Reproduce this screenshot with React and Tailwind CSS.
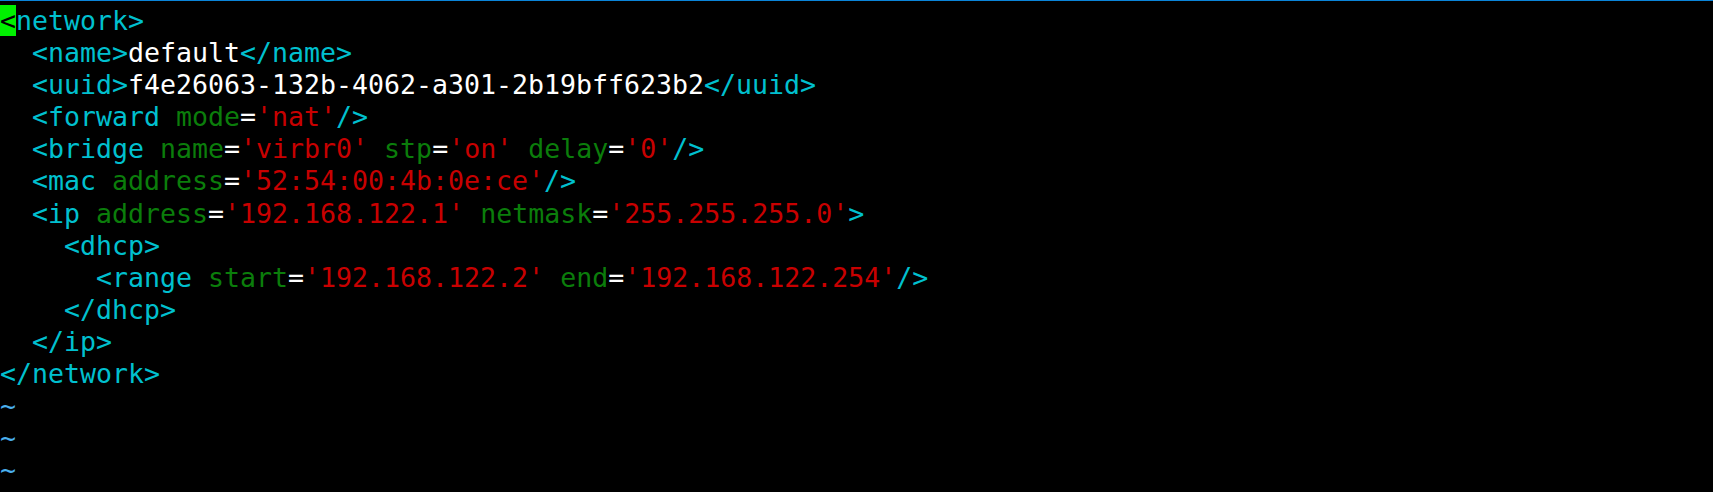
const Tag = ({ children }) => <span className="text-[#00c0cf]">{children}</span>;
const Attr = ({ children }) => <span className="text-[#0b7d0b]">{children}</span>;
const Val = ({ children }) => <span className="text-[#c80000]">{children}</span>;
const Eq = () => <span className="text-white">=</span>;

const lines = [
  <>
    <span className="bg-[#00f000] text-black">&lt;</span>
    <Tag>network&gt;</Tag>
  </>,
  <>
    {"  "}
    <Tag>&lt;name&gt;</Tag>
    <span className="text-white">default</span>
    <Tag>&lt;/name&gt;</Tag>
  </>,
  <>
    {"  "}
    <Tag>&lt;uuid&gt;</Tag>
    <span className="text-white">f4e26063-132b-4062-a301-2b19bff623b2</span>
    <Tag>&lt;/uuid&gt;</Tag>
  </>,
  <>
    {"  "}
    <Tag>&lt;forward</Tag> <Attr>mode</Attr>
    <Eq />
    <Val>'nat'</Val>
    <Tag>/&gt;</Tag>
  </>,
  <>
    {"  "}
    <Tag>&lt;bridge</Tag> <Attr>name</Attr>
    <Eq />
    <Val>'virbr0'</Val> <Attr>stp</Attr>
    <Eq />
    <Val>'on'</Val> <Attr>delay</Attr>
    <Eq />
    <Val>'0'</Val>
    <Tag>/&gt;</Tag>
  </>,
  <>
    {"  "}
    <Tag>&lt;mac</Tag> <Attr>address</Attr>
    <Eq />
    <Val>'52:54:00:4b:0e:ce'</Val>
    <Tag>/&gt;</Tag>
  </>,
  <>
    {"  "}
    <Tag>&lt;ip</Tag> <Attr>address</Attr>
    <Eq />
    <Val>'192.168.122.1'</Val> <Attr>netmask</Attr>
    <Eq />
    <Val>'255.255.255.0'</Val>
    <Tag>&gt;</Tag>
  </>,
  <>
    {"    "}
    <Tag>&lt;dhcp&gt;</Tag>
  </>,
  <>
    {"      "}
    <Tag>&lt;range</Tag> <Attr>start</Attr>
    <Eq />
    <Val>'192.168.122.2'</Val> <Attr>end</Attr>
    <Eq />
    <Val>'192.168.122.254'</Val>
    <Tag>/&gt;</Tag>
  </>,
  <>
    {"    "}
    <Tag>&lt;/dhcp&gt;</Tag>
  </>,
  <>
    {"  "}
    <Tag>&lt;/ip&gt;</Tag>
  </>,
  <Tag>&lt;/network&gt;</Tag>,
];

export default function App() {
  return (
    <div className="w-[1713px] h-[492px] overflow-hidden bg-black border-t border-[#0a84d8] pt-[4px]">
      <pre className="font-['DejaVu_Sans_Mono',monospace] text-[26.58px] leading-[32.1px] text-white m-0">
        {lines.map((line, i) => (
          <div key={i}>{line}</div>
        ))}
        {[0, 1, 2].map((i) => (
          <div key={"t" + i} className="text-[#4ab0ee]">~</div>
        ))}
      </pre>
    </div>
  );
}
